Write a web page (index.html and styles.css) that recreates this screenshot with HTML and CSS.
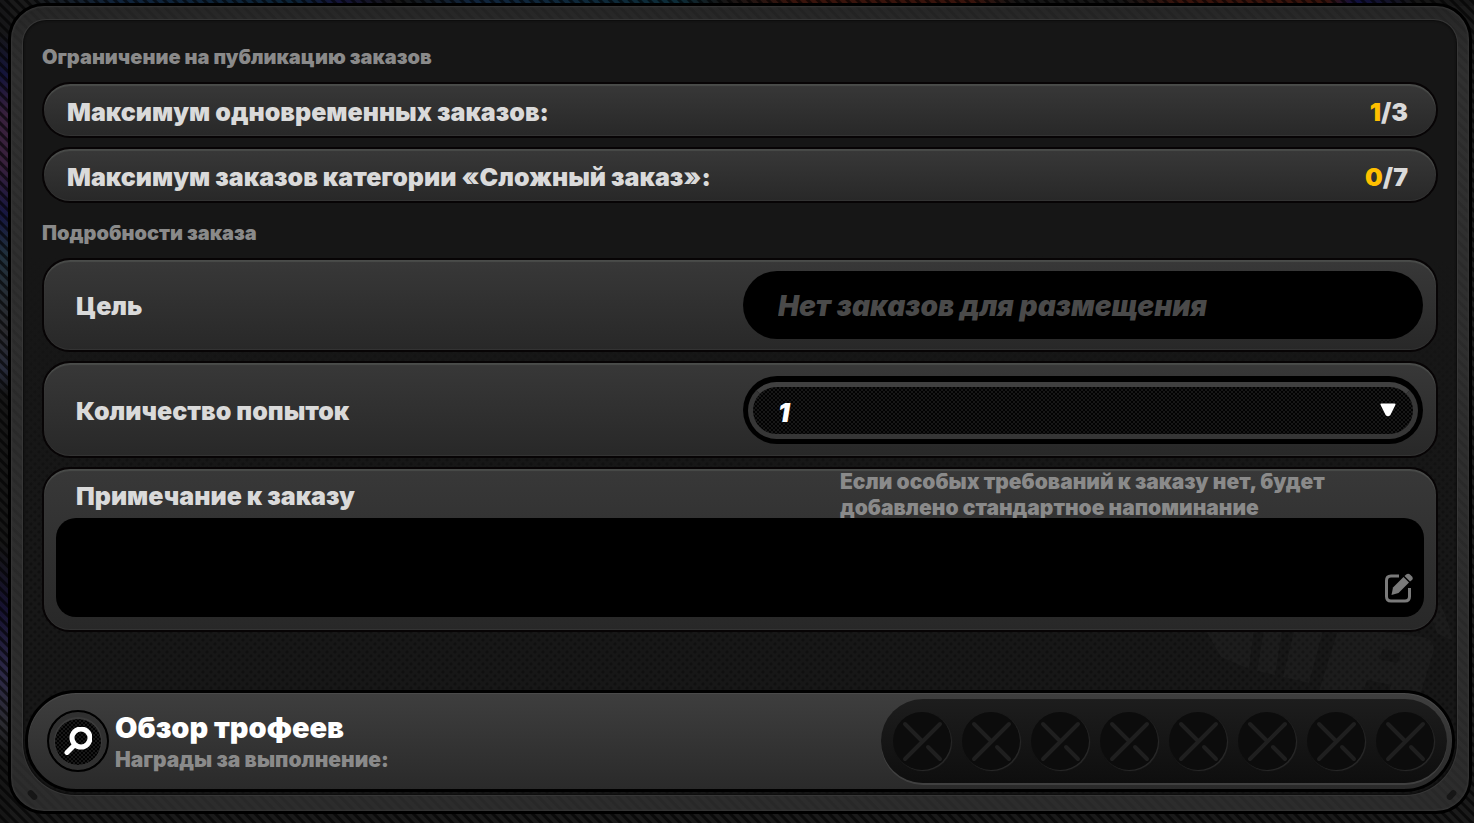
FILE: index.html
```html
<!DOCTYPE html>
<html lang="ru">
<head>
    <meta charset="UTF-8">
    <meta name="viewport" content="width=device-width, initial-scale=1.0">
    <title>Публикация заказа</title>
    <link rel="stylesheet" href="styles.css">
</head>
<body>
    <div class="frame">
        <span class="notch notch-left"></span>
        <span class="notch notch-right"></span>

        <main class="panel">
            <!-- faded emblem behind the form -->
            <svg class="emblem" viewBox="0 0 260 150" aria-hidden="true">
                <path d="M0 66 L58 72 L52 120 L24 108 Z M68 74 L86 76 L78 126 L60 122 Z M98 78 L126 82 L112 134 L86 128 Z M140 84 Q146 78 154 79 L226 88 Q240 92 236 104 L222 150 L190 150 L194 136 L170 131 L164 150 L122 142 Z M186 100 L182 110 L200 114 L204 104 Z" fill-rule="evenodd"/>
                <path d="M206 0 Q244 40 256 92 L240 84 Q228 44 200 18 Z"/>
            </svg>

            <form class="order-form">
                <h2 class="section-title">Ограничение на публикацию заказов</h2>
                <div class="limits">
                    <div class="row limit-row">
                        <span class="label">Максимум одновременных заказов:</span>
                        <span class="limit-value"><span class="current">1</span>/3</span>
                    </div>
                    <div class="row limit-row">
                        <span class="label">Максимум заказов категории «Сложный заказ»:</span>
                        <span class="limit-value"><span class="current">0</span>/7</span>
                    </div>
                </div>

                <h2 class="section-title">Подробности заказа</h2>
                <div class="details">
                    <div class="row field-row">
                        <label class="label" for="target">Цель</label>
                        <input class="target-input" id="target" type="text" placeholder="Нет заказов для размещения" readonly>
                    </div>
                    <div class="row field-row">
                        <label class="label" for="attempts">Количество попыток</label>
                        <div class="select-box">
                            <select id="attempts">
                                <option>1</option>
                                <option>2</option>
                                <option>3</option>
                            </select>
                            <svg class="arrow" viewBox="0 0 16 14" aria-hidden="true">
                                <path d="M1.500 1.500 H14.500 L9.500 11.500 Q8 13 6.500 11.500 Z"/>
                            </svg>
                        </div>
                    </div>
                    <div class="row note-row">
                        <div class="note-head">
                            <label class="label" for="note">Примечание к заказу</label>
                            <p class="note-hint">Если особых требований к заказу нет, будет добавлено стандартное напоминание</p>
                        </div>
                        <div class="note-box">
                            <textarea id="note"></textarea>
                            <svg class="edit-icon" viewBox="0 0 28 30" aria-hidden="true">
                                <path class="edit-sheet" d="M14 3 H6 Q1.500 3 1.500 7.500 V23.500 Q1.500 28 6 28 H20 Q24.500 28 24.500 23.500 V15"/>
                                <path class="edit-pencil" d="M6.500 22 L8 14.500 L18.500 4 L24 9.500 L13.500 20 Z"/>
                                <path class="edit-pencil" d="M19.500 3 L21.500 1.200 Q23.500 0 25.500 2 L27 3.500 Q28.500 5.500 27 7 L25 8.500 Z"/>
                            </svg>
                        </div>
                    </div>
                </div>
            </form>

            <footer class="trophy-bar">
                <button class="view-button" type="button" aria-label="Обзор трофеев">
                    <svg viewBox="0 0 28 28" aria-hidden="true">
                        <circle cx="17" cy="11" r="9"/>
                        <path d="M10.500 18 L3 25.500"/>
                    </svg>
                </button>
                <div class="trophy-text">
                    <h3>Обзор трофеев</h3>
                    <p>Награды за выполнение:</p>
                </div>
                <div class="slots">
                    <svg class="slot" viewBox="0 0 58 58"><path d="M47 12 L12 47 M12 12 L29 29 M35 35 L47 47"/></svg>
                    <svg class="slot" viewBox="0 0 58 58"><path d="M47 12 L12 47 M12 12 L29 29 M35 35 L47 47"/></svg>
                    <svg class="slot" viewBox="0 0 58 58"><path d="M47 12 L12 47 M12 12 L29 29 M35 35 L47 47"/></svg>
                    <svg class="slot" viewBox="0 0 58 58"><path d="M47 12 L12 47 M12 12 L29 29 M35 35 L47 47"/></svg>
                    <svg class="slot" viewBox="0 0 58 58"><path d="M47 12 L12 47 M12 12 L29 29 M35 35 L47 47"/></svg>
                    <svg class="slot" viewBox="0 0 58 58"><path d="M47 12 L12 47 M12 12 L29 29 M35 35 L47 47"/></svg>
                    <svg class="slot" viewBox="0 0 58 58"><path d="M47 12 L12 47 M12 12 L29 29 M35 35 L47 47"/></svg>
                    <svg class="slot" viewBox="0 0 58 58"><path d="M47 12 L12 47 M12 12 L29 29 M35 35 L47 47"/></svg>
                </div>
            </footer>
        </main>
    </div>
</body>
</html>
```
FILE: styles.css
```css
* {
    box-sizing: border-box;
}

body {
    margin: 0;
    min-height: 100vh;
    padding: 3px 2px 9px 8px;
    display: flex;
    font-family: Inter, "Liberation Sans", sans-serif;
    font-weight: 900;
    color: #dadada;
    background:
        repeating-linear-gradient(45deg, transparent 0 3px, rgba(0, 0, 0, 0.6) 4px 6px, transparent 7px),
        linear-gradient(to right, transparent 2%, #10243c 8%, #0c2438 20%, #14143a 23%, #161616 27%, #10243c 32%, #0c2c38 46%, #161616 49%, #3a140c 54%, #3a140c 66%, #161616 69%, #161616 76%, #3a140c 80%, #3a140c 90%, #101040 92%, #161616 96%) top / 100% 6px no-repeat,
        linear-gradient(#161618 4%, #14143a 9%, #38203c 14%, #38203c 20%, #161640 26%, #20303c 31%, #2a2a2e 40%, #262a3a 45%, #161616 48%, #161616 66%, #161230 74%, #2c2846 82%, #2a2a30 88%, #161616 92%) left / 10px 100% no-repeat,
        #1a1a1a;
}

h2,
h3,
p {
    margin: 0;
    font-weight: 900;
}

.frame {
    position: relative;
    flex: 1;
    display: flex;
    padding: 14px 12px 16px;
    border: 3px solid #000;
    border-radius: 36px;
    background:
        repeating-linear-gradient(45deg, transparent 0 3px, rgba(0, 0, 0, 0.1) 4px 6px, transparent 7px),
        linear-gradient(#262626, #303030 8%, #2c2c2c);
    box-shadow: inset 0 0 2px 1px #383838;
}

.notch {
    position: absolute;
    bottom: 13px;
    width: 11px;
    height: 6px;
    border-radius: 3px;
    background: #161616;
}

.notch-left {
    left: 16px;
    transform: rotate(45deg);
}

.notch-right {
    right: 12px;
    transform: rotate(-45deg);
}

.panel {
    position: relative;
    flex: 1;
    display: flex;
    flex-direction: column;
    border-radius: 23px 23px 52px 52px;
    background:
        linear-gradient(#161616 30%, transparent 70%),
        radial-gradient(circle, #101010 1px, transparent 2px) 0 0 / 8px 8px,
        radial-gradient(circle, #101010 1px, transparent 2px) 4px 4px / 8px 8px,
        #171717;
    box-shadow: 0 0 0 1px #363636, inset 0 0 2px 1px #0c0c0c;
}

.emblem {
    position: absolute;
    right: 0;
    bottom: 96px;
    width: 260px;
    height: 150px;
    fill: rgba(255, 255, 255, 0.025);
}

.order-form {
    position: relative;
    padding: 25px 19px 0;
}

.section-title {
    margin-bottom: 13px;
    font-size: 20px;
    line-height: 24px;
    color: #8a8a8a;
}

.limits,
.details {
    display: flex;
    flex-direction: column;
    gap: 9px;
}

.limits {
    margin-bottom: 18px;
}

.row {
    border: 2px solid #070405;
    border-radius: 28px;
    background: linear-gradient(#383838, #282828);
    box-shadow: inset 0 2px 1px #4a4c4a, inset 0 -1px 0 #333;
}

.label,
.limit-value {
    padding-top: 2px;
    font-size: 25px;
    line-height: 32px;
}

.limit-row {
    display: flex;
    justify-content: space-between;
    padding: 10px 28px 8px 23px;
}

.current {
    color: #ffc000;
}

.field-row {
    display: grid;
    grid-template-columns: 1fr minmax(0, 680px);
    align-items: center;
    padding: 11px 13px 11px 32px;
}

.target-input {
    width: 100%;
    height: 68px;
    padding: 2px 35px 0;
    border: 0;
    border-radius: 34px;
    background: #000;
    font: italic 900 28px Inter, "Liberation Sans", sans-serif;
    color: #4a4a4a;
}

.target-input::placeholder {
    color: #4a4a4a;
}

.select-box {
    position: relative;
    margin: 2px 0 1px;
    padding: 6px 5px 5px;
    border-radius: 34px;
    background: #000;
}

.select-box select {
    display: block;
    appearance: none;
    width: 100%;
    height: 57px;
    padding: 4px 40px 0 25px;
    border: 5px solid #363636;
    border-top-color: #404040;
    border-radius: 29px;
    background: repeating-conic-gradient(#171717 0 25%, #020202 0 50%) 0 0 / 4px 4px;
    font: italic 900 26px Inter, "Liberation Sans", sans-serif;
    color: #fff;
}

.arrow {
    position: absolute;
    top: 27px;
    right: 27px;
    width: 16px;
    height: 14px;
    fill: #fff;
    stroke: #fff;
    stroke-width: 2;
    stroke-linejoin: round;
    pointer-events: none;
}

.note-row {
    padding: 0 12px 13px;
}

.note-head {
    display: grid;
    grid-template-columns: 1fr minmax(0, 584px);
    align-items: center;
    height: 49px;
    padding-left: 20px;
}

.note-hint {
    padding-right: 60px;
    font-size: 21px;
    line-height: 26px;
    color: #8a8a8a;
}

.note-box {
    position: relative;
}

.note-box textarea {
    display: block;
    width: 100%;
    height: 99px;
    padding: 12px 56px 12px 20px;
    border: 0;
    border-radius: 20px;
    background: #000;
    font: 700 20px Inter, "Liberation Sans", sans-serif;
    color: #dadada;
    resize: none;
}

.edit-icon {
    position: absolute;
    right: 11px;
    bottom: 14px;
    width: 28px;
    height: 30px;
}

.edit-sheet {
    fill: none;
    stroke: #7a7a7a;
    stroke-width: 3;
}

.edit-pencil {
    fill: #7a7a7a;
}

.trophy-bar {
    position: relative;
    display: flex;
    align-items: center;
    margin: auto 2px 3px;
    padding: 6px 5px 6px 19px;
    border: 3px solid #000;
    border-radius: 51px;
    background: linear-gradient(#3e3e3e, #2a2a2a);
    box-shadow: inset 0 1px 1px #4c4c4c;
}

.view-button {
    flex: none;
    display: grid;
    place-items: center;
    width: 62px;
    height: 62px;
    padding: 0;
    border: 2px solid #000;
    border-radius: 50%;
    background: repeating-conic-gradient(#171717 0 25%, #020202 0 50%) 0 0 / 4px 4px;
    box-shadow: inset 0 0 0 5px #303030, inset 0 1px 0 6px #3a3a3a;
}

.view-button svg {
    width: 28px;
    height: 28px;
    fill: none;
    stroke: #fff;
    stroke-width: 5;
    stroke-linecap: round;
}

.trophy-text {
    flex: 1;
    padding: 3px 0 0 6px;
}

.trophy-text h3 {
    font-size: 29px;
    line-height: 34px;
    color: #fff;
}

.trophy-text p {
    font-size: 21px;
    line-height: 30px;
    color: #8a8a8a;
}

.slots {
    display: flex;
    gap: 11px;
    padding: 13px 13px 13px 12px;
    border-radius: 42px;
    background: linear-gradient(#1d1d1d, #0e0e0e);
    box-shadow: 0 2px 0 #404040;
}

.slot {
    width: 58px;
    height: 58px;
    border-radius: 50%;
    background: #0c0c0c;
    box-shadow: 1px 1px 1px #2a2a2a;
    fill: none;
    stroke: #1f1f1f;
    stroke-width: 4;
    stroke-linecap: round;
}
```
